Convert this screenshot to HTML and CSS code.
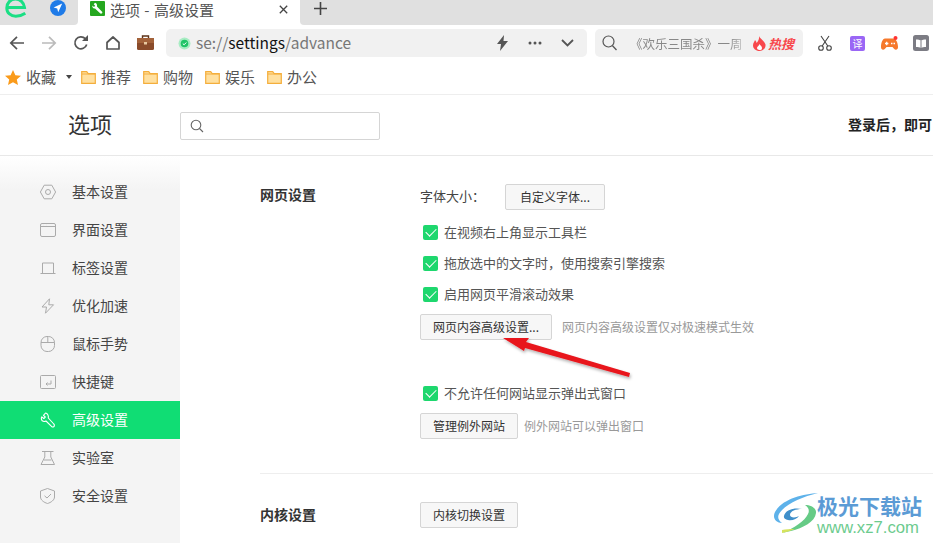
FILE: index.html
```html
<!DOCTYPE html>
<html lang="zh">
<head>
<meta charset="utf-8">
<title>选项 - 高级设置</title>
<link rel="stylesheet" href="styles.css">
</head>
<body>
<div class="tabbar">
  <div class="tab-pins">
    <svg class="logo-e" width="22" height="18" viewBox="0 0 22 18"><path d="M3 7.500h16.500C19 2.500 15-1 10.500-1 5.500-1 1.800 3 1.800 8c0 5 4 8.200 9 8.200 3.500 0 6.500-1 9.500-3" fill="none" stroke="#1adf84" stroke-width="3"/></svg>
    <svg class="logo-nav" width="16" height="16" viewBox="0 0 16 16"><circle cx="8" cy="8" r="8" fill="#1f7be8"/><path d="M12.200 3.600 3.600 7.600l3.600.9 1 3.800z" fill="#fff"/></svg>
  </div>
  <div class="tab-active">
    <svg class="tab-icon" width="15" height="15" viewBox="0 0 15 15"><rect width="15" height="15" rx="1" fill="#25a71f"/><path d="M5 1.800 3.700 3.300 5.200 4.800 4 6 2.400 4.600C2 6.400 3.200 7.700 5 7.400L10.400 12.600C11.200 13.200 12.800 12 12.300 11L7 5.600C7.400 3.700 6.500 2.200 5 1.800z" fill="#fff"/></svg>
    <span class="tab-title">选项 - 高级设置</span>
    <svg class="tab-close" width="9" height="9" viewBox="0 0 9 9"><path d="M.8.8l7.400 7.400M8.200.8.8 8.200" stroke="#444" stroke-width="1.300"/></svg>
  </div>
  <div class="tab-rest">
    <svg class="tab-plus" width="13" height="13" viewBox="0 0 13 13"><path d="M6.500 0v13M0 6.500h13" stroke="#444" stroke-width="1.600"/></svg>
  </div>
</div>

<div class="toolbar">
  <div class="nav-icons">
    <svg width="16" height="16" viewBox="0 0 16 16"><path d="M15 8H2M8 1.800 1.800 8 8 14.200" fill="none" stroke="#555" stroke-width="1.700"/></svg>
    <svg width="16" height="16" viewBox="0 0 16 16"><path d="M1 8h13M8 1.800 14.200 8 8 14.200" fill="none" stroke="#bbb" stroke-width="1.700"/></svg>
    <svg width="16" height="16" viewBox="0 0 16 16"><path d="M13.700 9.500A6 6 0 1 1 12.300 3.700" fill="none" stroke="#555" stroke-width="1.700"/><path d="M9 6h6V0z" fill="#555"/></svg>
    <svg width="16" height="16" viewBox="0 0 16 16"><path d="M2 7.500 8 2l6 5.500V14H2z" fill="none" stroke="#555" stroke-width="1.700" stroke-linejoin="round"/></svg>
    <svg width="17" height="16" viewBox="0 0 17 16"><rect y="3" width="17" height="12" rx="1.500" fill="#8a4b2a"/><rect y="3" width="17" height="5" fill="#a3623a"/><path d="M5.500 3V1h6v2" fill="none" stroke="#5d3319" stroke-width="1.400"/><rect x="7" y="7" width="3" height="2.500" fill="#e8c9a0"/></svg>
  </div>
  <div class="address">
    <svg class="secure" width="13" height="13" viewBox="0 0 13 13"><circle cx="6.500" cy="6.500" r="6" fill="#a8ecc3"/><circle cx="6.500" cy="6.500" r="3.800" fill="#1fc467"/><path d="M4.800 6.600l1.300 1.200 2.200-2.300" fill="none" stroke="#fff"/></svg>
    <span class="url">se://<b>settings</b>/advance</span>
    <div class="addr-tools">
      <svg width="13" height="16" viewBox="0 0 13 16"><path d="M8 0 1 9h4l-1 7 8-10H7.500z" fill="#555"/></svg>
      <svg width="14" height="4" viewBox="0 0 14 4"><circle cx="2" cy="2" r="1.500" fill="#555"/><circle cx="7" cy="2" r="1.500" fill="#555"/><circle cx="12" cy="2" r="1.500" fill="#555"/></svg>
      <svg width="13" height="8" viewBox="0 0 13 8"><path d="M1 1l5.500 5.500L12 1" fill="none" stroke="#555" stroke-width="1.800"/></svg>
    </div>
  </div>
  <div class="searchbox">
    <svg width="15" height="16" viewBox="0 0 15 16"><circle cx="6.500" cy="6.500" r="5.500" fill="none" stroke="#555" stroke-width="1.200"/><path d="M10.500 10.800 14.500 15" stroke="#555" stroke-width="1.300"/></svg>
    <span class="search-text">《欢乐三国杀》一周</span>
    <svg class="flame" width="13" height="15" viewBox="0 0 13 15"><path d="M6 0c1 3 5 4 6.500 8.500C13 12 10 15 6.500 15S0 12.500 0 9.500C0 7 1.500 5.500 2 4c1 1 1.500 2 1.500 3C5 5.500 6.500 3 6 0z" fill="#f8484c"/><path d="M6.500 8c.5 1.500 2.500 2 2.500 4s-1.200 2-2.500 2S4 13 4 12c0-1.500 2-2 2.500-4z" fill="#fff"/></svg>
    <span class="hot">热搜</span>
  </div>
  <div class="ext-icons">
    <svg width="14" height="16" viewBox="0 0 14 16"><circle cx="3" cy="13" r="2.300" fill="none" stroke="#444" stroke-width="1.100"/><circle cx="11" cy="13" r="2.300" fill="none" stroke="#444" stroke-width="1.100"/><path d="M4.200 11 11 1M9.800 11 3 1" stroke="#444" stroke-width="1.100"/></svg>
    <span class="ext-yi">译</span>
    <svg width="17" height="15" viewBox="0 0 17 15"><path d="M4 2.500h8.500c2.500 0 4.500 4.500 4.500 8.500 0 3-2.500 3.500-4 1.800L11.500 11h-6L4 12.800C2.500 14.500 0 14 0 11 0 7 1.500 2.500 4 2.500z" fill="#f6792c"/><path d="M4 7.500h3.400M5.700 5.800v3.400M10 7.500h1.500M12.500 7.500h1.500" stroke="#fff" stroke-width="1.300"/><circle cx="14.500" cy="2" r="2" fill="#f33"/></svg>
    <svg width="16" height="16" viewBox="0 0 16 16"><rect width="16" height="16" rx="2.500" fill="#7c7c84"/><path d="M3 4.500c2 0 4 .3 5 1.200 1-.9 3-1.200 5-1.200v7.500c-2 0-4 .3-5 1-1-.7-3-1-5-1z" fill="#fff"/><path d="M8 5.700V13" stroke="#7c7c84"/></svg>
  </div>
</div>

<div class="bookmarks">
  <svg class="star" width="16" height="15" viewBox="0 0 16 15"><path d="M8 0l2.400 5.200 5.600.6-4.200 3.700 1.200 5.500L8 12.200 3 15l1.200-5.500L0 5.800l5.600-.6z" fill="#fa9b1b"/></svg>
  <span class="bm-fav">收藏</span>
  <span class="bm-caret"></span>
  <div class="bm-item"><svg width="15" height="13" viewBox="0 0 15 13"><path d="M.7 12.300V.7h5l1.500 2h7.100v9.600z" fill="#ffe0a0" stroke="#f4ae3c" stroke-width="1.200"/><path d="M1 3h13" stroke="#f4ae3c"/></svg>推荐</div>
  <div class="bm-item"><svg width="15" height="13" viewBox="0 0 15 13"><path d="M.7 12.300V.7h5l1.500 2h7.100v9.600z" fill="#ffe0a0" stroke="#f4ae3c" stroke-width="1.200"/><path d="M1 3h13" stroke="#f4ae3c"/></svg>购物</div>
  <div class="bm-item"><svg width="15" height="13" viewBox="0 0 15 13"><path d="M.7 12.300V.7h5l1.500 2h7.100v9.600z" fill="#ffe0a0" stroke="#f4ae3c" stroke-width="1.200"/><path d="M1 3h13" stroke="#f4ae3c"/></svg>娱乐</div>
  <div class="bm-item"><svg width="15" height="13" viewBox="0 0 15 13"><path d="M.7 12.300V.7h5l1.500 2h7.100v9.600z" fill="#ffe0a0" stroke="#f4ae3c" stroke-width="1.200"/><path d="M1 3h13" stroke="#f4ae3c"/></svg>办公</div>
</div>

<header class="page-head">
  <h1 class="page-title">选项</h1>
  <div class="page-search">
    <svg width="14" height="14" viewBox="0 0 14 14"><circle cx="6" cy="6" r="4.800" fill="none" stroke="#666" stroke-width="1.100"/><path d="M9.500 9.500 13 13" stroke="#666" stroke-width="1.100"/></svg>
  </div>
  <div class="login-tip">登录后，即可</div>
</header>

<div class="page-body">
  <nav class="sidebar">
    <a class="side-item"><svg width="16" height="16" viewBox="0 0 16 16"><path d="M4.200 1.200h7.600L15.600 8l-3.800 6.800H4.200L.4 8z" fill="none" stroke="#aaa"/><circle cx="8" cy="8" r="2.500" fill="none" stroke="#aaa"/></svg><span class="side-text">基本设置</span></a>
    <a class="side-item"><svg width="16" height="16" viewBox="0 0 16 16"><rect x=".5" y="1.500" width="15" height="13" rx="1.500" fill="none" stroke="#aaa"/><path d="M1 4.500h14M3.500 3h.1M6 3h.1" stroke="#aaa"/></svg><span class="side-text">界面设置</span></a>
    <a class="side-item"><svg width="16" height="16" viewBox="0 0 16 16"><path d="M2.500 13V3h11v10M.5 13.500h15" fill="none" stroke="#aaa"/></svg><span class="side-text">标签设置</span></a>
    <a class="side-item"><svg width="16" height="16" viewBox="0 0 16 16"><path d="M9.500.8 2 9h4.500L5.500 15.200 13.500 6.800H8.800z" fill="none" stroke="#aaa" stroke-linejoin="round"/></svg><span class="side-text">优化加速</span></a>
    <a class="side-item"><svg width="16" height="16" viewBox="0 0 16 16"><rect x="1" y=".5" width="13.500" height="15" rx="6" fill="none" stroke="#aaa"/><path d="M1 6.500h13.500M7.800.5v6" stroke="#aaa"/></svg><span class="side-text">鼠标手势</span></a>
    <a class="side-item"><svg width="16" height="16" viewBox="0 0 16 16"><rect x=".5" y="1.500" width="15" height="13" rx="1" fill="none" stroke="#aaa"/><path d="M11 6.500v3.500H6M7.500 8.500 6 10l1.500 1.500" fill="none" stroke="#aaa"/></svg><span class="side-text">快捷键</span></a>
    <a class="side-item side-active"><svg width="16" height="16" viewBox="0 0 16 16"><path d="M5.500 1 3.500 3.300 5.300 5 3.800 6.500 1.800 4.800C.8 6.500 1.500 8.800 3.300 9.300 4.300 9.600 5.300 9.400 6 9l6 5.800c.8.600 2 0 2.300-.8.300-.8 0-1.500-.5-2L8.300 6C8.800 3.500 7.500 1.300 5.500 1z" fill="none" stroke="#fff" stroke-width="1.100" stroke-linejoin="round"/></svg><span class="side-text">高级设置</span></a>
    <a class="side-item"><svg width="16" height="16" viewBox="0 0 16 16"><path d="M2 1.500h11.500M4.800 1.500v5.500L1 14.500h13.500L10.800 7V1.500M4 10h7.500" fill="none" stroke="#aaa"/></svg><span class="side-text">实验室</span></a>
    <a class="side-item"><svg width="16" height="16" viewBox="0 0 16 16"><path d="M7.500.5 14.500 3v6c0 3-3.500 5.500-7 6.500C4 14.500.5 12 .5 9V3z" fill="none" stroke="#aaa"/><path d="M4.500 7.800 7 10l4-4" fill="none" stroke="#aaa"/></svg><span class="side-text">安全设置</span></a>
  </nav>
  <main class="content">
    <section class="group group-web">
      <h2 class="group-label">网页设置</h2>
      <div class="group-main">
        <div class="font-row"><span class="font-label">字体大小：</span><button class="btn btn-font">自定义字体...</button></div>
        <label class="check-row"><span class="check"></span><span class="row-text">在视频右上角显示工具栏</span></label>
        <label class="check-row"><span class="check"></span><span class="row-text">拖放选中的文字时，使用搜索引擎搜索</span></label>
        <label class="check-row"><span class="check"></span><span class="row-text">启用网页平滑滚动效果</span></label>
        <div class="btn-row"><button class="btn btn-advanced">网页内容高级设置...</button><span class="hint">网页内容高级设置仅对极速模式生效</span></div>
        <label class="check-row check-popup"><span class="check"></span><span class="row-text">不允许任何网站显示弹出式窗口</span></label>
        <div class="btn-row"><button class="btn">管理例外网站</button><span class="hint hint-except">例外网站可以弹出窗口</span></div>
      </div>
    </section>
    <section class="group group-kernel">
      <h2 class="group-label">内核设置</h2>
      <div class="group-main"><button class="btn">内核切换设置</button></div>
    </section>
  </main>
</div>

<svg class="arrow" width="136" height="52" viewBox="0 0 136 52">
  <defs><filter id="sh" x="-10%" y="-20%" width="120%" height="170%"><feDropShadow dx="1" dy="2" stdDeviation="1.500" flood-color="#000" flood-opacity=".3"/></filter></defs>
  <path d="M3 5 29 5 26 9 130 40 129 44 25 15 24 18z" fill="#e8141c" filter="url(#sh)"/>
</svg>

<div class="watermark">
  <svg width="46" height="40" viewBox="0 0 46 40">
    <path d="M45 0C30 1 9 6 2 19c-3 6 1 11 7 11-3-2-5-5-3-9C11 12 28 4 45 0z" fill="#5eb2ea"/>
    <path d="M9 40c3-1 5-1 9-2 12-3 24-9 25-18 .5-5-5-8-11-8 3 2 5 5 3 9-3 7-14 14-26 19z" fill="#66cb86"/>
    <path d="M9 40c4-1 8-2 13-4-5 0-9 0-13 1z" fill="#d6e35e"/>
    <path d="M11 23c1-6 10-9 18-7-6 0-12 2-12 6 0 3 6 3 9 1-2 3-7 5-11 4-3-.5-4.500-2-4-4z" fill="#3f8fca"/>
  </svg>
  <div class="wm-text"><div class="wm-name">极光下载站</div><div class="wm-url">www.xz7.com</div></div>
</div>
</body>
</html>
```

FILE: styles.css
```css
* { box-sizing: border-box; }
html, body { margin: 0; padding: 0; }
body {
  width: 933px;
  height: 543px;
  overflow: hidden;
  background: #fff;
  position: relative;
  font-family: "Noto Sans CJK SC", "Liberation Sans", sans-serif;
  color: #333;
}
svg { display: block; flex: none; }

.tabbar { display: flex; height: 25px; background: #fff; overflow: hidden; }
.tab-pins {
  width: 78px; height: 25px; flex: none; background: #e0e0e0; border-radius: 0 0 4px 0;
  display: flex; align-items: flex-start; padding-left: 5px;
}
.logo-nav { margin-left: 23px; }
.tab-active {
  width: 222px; flex: none; height: 25px; background: #fff;
  display: flex; align-items: flex-start; padding: 1px 0 0 12px;
}
.tab-title { margin: -1px 0 0 5px; font-size: 15px; line-height: 20px; color: #555; word-spacing: 1px; }
.tab-close { margin: 4px 12px 0 auto; }
.tab-rest { flex: 1; background: #e0e0e0; border-radius: 0 0 0 4px; padding: 2px 0 0 14px; }

.toolbar { display: flex; align-items: center; height: 37px; background: #fff; padding: 4px 0 5px; }
.nav-icons { display: flex; align-items: center; gap: 16px; width: 166px; flex: none; padding-left: 9px; }
.address {
  width: 421px; flex: none; height: 28px; background: #f1f1f1; border-radius: 5px;
  display: flex; align-items: center; padding-left: 12px;
}
.url { margin-left: 5px; font-size: 15.5px; line-height: 20px; color: #777; padding-bottom: 2px; }
.url b { font-weight: 400; color: #111; }
.addr-tools { display: flex; align-items: center; margin-left: auto; gap: 19px; padding-right: 13px; }
.searchbox {
  width: 208px; flex: none; height: 28px; margin-left: 8px; background: #f1f1f1; border-radius: 5px;
  display: flex; align-items: center; padding-left: 7px;
}
.search-text {
  margin-left: 13px; width: 113px; flex: none; font-size: 12.5px; white-space: nowrap; color: #888;
  -webkit-mask-image: linear-gradient(90deg, #000 88%, rgba(0,0,0,.35));
  mask-image: linear-gradient(90deg, #000 88%, rgba(0,0,0,.35));
}
.flame { margin-left: 10px; }
.hot { margin-left: 2px; font-size: 13px; font-weight: 700; font-style: italic; color: #f8484c; white-space: nowrap; }
.ext-icons { display: flex; align-items: center; margin-left: 15px; }
.ext-yi {
  width: 15px; height: 15px; margin: 0 16px 0 18px; background: #9a66f5; color: #fff; border-radius: 2px;
  font-size: 10px; line-height: 15px; text-align: center;
}
.ext-icons > :last-child { margin-left: 15px; }

.bookmarks {
  display: flex; align-items: center; height: 33px; padding: 0 0 2px 5px;
  border-bottom: 1px solid #eee; font-size: 15px; line-height: 20px; color: #555;
}
.bm-fav { margin-left: 5px; margin-right: -1px; }
.bm-caret {
  width: 0; height: 0; margin-left: 11px;
  border: 3.500px solid transparent; border-top: 4px solid #444; border-bottom: 0;
}
.bm-item { display: flex; align-items: center; gap: 5px; margin-left: 9px; }
.bm-item + .bm-item { margin-left: 12px; }

.page-head { display: flex; align-items: center; height: 61px; border-bottom: 1px solid #e8e8e8; }
.page-title { margin: 0 0 4px 68px; width: 112px; flex: none; font-size: 22px; font-weight: 400; color: #333; line-height: 30px; }
.page-search {
  width: 200px; flex: none; height: 28px; margin-top: 2px; border: 1px solid #d5d5d5; border-radius: 2px;
  display: flex; align-items: center; padding-left: 9px;
}
.login-tip { margin: 0 0 2px auto; width: 85px; font-size: 14px; font-weight: 700; color: #222; white-space: nowrap; }

.page-body { display: flex; height: 388px; }
.sidebar {
  width: 180px; flex: none; padding-top: 17px;
  background: linear-gradient(#fff, #f4f4f4 34px);
}
.side-item {
  display: flex; align-items: center; height: 38px; padding-left: 40px;
  gap: 16px; font-size: 14px; color: #444;
}
.side-text { padding-bottom: 2px; }
.side-active { background: #10dd74; color: #fff; }

.content { flex: 1; padding-left: 80px; overflow: hidden; }
.group { display: flex; }
.group-label { margin: 0; width: 160px; flex: none; font-size: 14px; font-weight: 700; color: #333; line-height: 20px; height: 26px; }
.group-web { padding: 28px 0 34px; border-bottom: 1px solid #eee; }
.group-kernel { padding-top: 28px; }
.group-kernel .group-label { padding-top: 2px; }

.font-row { display: flex; align-items: center; font-size: 13px; color: #444; }
.font-label { width: 85px; padding-bottom: 3px; }
.btn {
  display: block; height: 26px; padding: 0 12px; background: #f7f7f7; border: 1px solid #d5d5d5; border-radius: 2px;
  font: 12px/22px "Noto Sans CJK SC", sans-serif; color: #333; white-space: nowrap;
}
.btn-font { width: 100px; padding: 0; }
.check-row {
  display: flex; align-items: center; height: 20px; margin: 11px 0 0 3px;
  gap: 6px; font-size: 13px; color: #555;
}
.font-row + .check-row { margin-top: 12px; }
.row-text { padding-bottom: 2px; }
.check {
  width: 15px; height: 15px; border-radius: 2px; background: #1ed76e; position: relative; flex: none;
}
.check::after {
  content: ""; position: absolute; left: 3px; top: 3px; width: 9px; height: 5px;
  border-left: 1.500px solid #fff; border-bottom: 1.500px solid #fff; transform: rotate(-45deg);
}
.btn-row { display: flex; align-items: center; margin-top: 10px; }
.btn-advanced { width: 132px; padding: 0; }
.hint { margin-left: 10px; font-size: 12px; color: #999; padding-bottom: 2px; }
.hint-except { margin-left: 6px; }
.check-row.check-popup { margin-top: 43px; }

.arrow { position: absolute; left: 500px; top: 333px; }
.watermark { position: absolute; left: 773px; top: 493px; display: flex; align-items: flex-start; }
.wm-text { margin-left: -2px; }
.wm-name { font-size: 21px; line-height: 24px; font-weight: 700; color: #5b9bd5; white-space: nowrap; }
.wm-url { font-size: 16.700px; line-height: 16px; margin-top: 3px; color: #6ccb8e; font-family: "Liberation Sans", sans-serif; white-space: nowrap; }
```
